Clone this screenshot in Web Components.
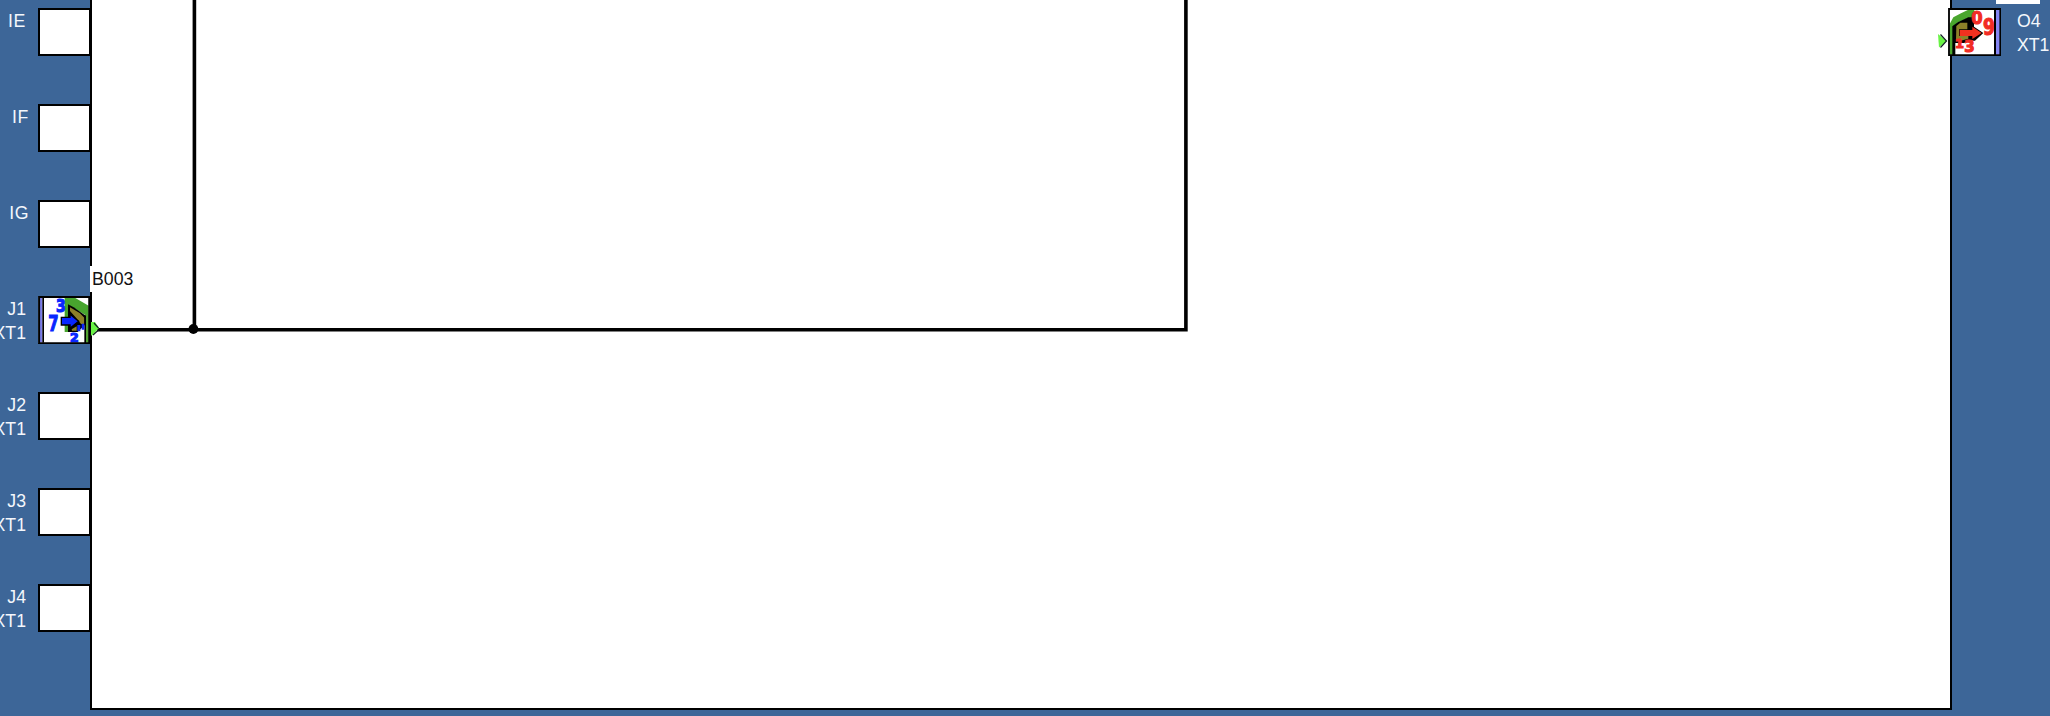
<!DOCTYPE html>
<html lang="en"><head><meta charset="utf-8"><title>Circuit sheet</title>
<style>html,body{margin:0;height:100%;overflow:hidden;background:#3d6698}</style></head><body>
<circuit-editor></circuit-editor>
<script>
const define=(name,html)=>customElements.define(name,class extends HTMLElement{
 constructor(){super();this.attachShadow({mode:'open'}).innerHTML=html;}
});
define('input-terminal',`<style>
:host{display:flex;height:96px;width:92px;color:#f4f7fc;font:17.7px/24px "Liberation Sans",Arial,sans-serif}
.l{width:38px;flex:none;display:flex;flex-direction:column;align-items:flex-end;white-space:nowrap;padding-top:1px;box-sizing:border-box}
.l ::slotted(*){margin-right:var(--gap,12px)}
.b{box-sizing:border-box;width:52px;height:48px;border:2px solid #000;border-right-width:1px;background:#fff;flex:none}
::slotted(svg){display:block;margin:-2px}
</style><div class="l"><slot></slot></div><div class="b"><slot name="icon"></slot></div>`);
define('output-terminal',`<style>
:host{display:flex;height:96px;color:#f4f7fc;font:17.7px/24px "Liberation Sans",Arial,sans-serif}
.b{width:53px;height:48px;flex:none}.l{padding:1px 0 0 16px;display:flex;flex-direction:column;white-space:nowrap}
::slotted(svg){display:block}
</style><div class="b"><slot name="icon"></slot></div><div class="l"><slot></slot></div>`);
define('wire-layer',`<style>:host{display:block;width:100%;height:100%}svg{display:block;overflow:visible}</style>
<svg width="1859" height="708" viewBox="92 0 1859 708"><g fill="none" stroke="#000" stroke-width="3.6"><path d="M194.4 0V330M97 329.8H1185.9V0" stroke-linejoin="miter"/></g><circle cx="193.4" cy="329" r="4.9"/>
<path d="M91 322L95 322L99 328L92 335.5H91Z" fill="#69f345"/><path d="M94 323L98.5 328M98.5 330L93 335" stroke="#122" stroke-width="1.2"/>
<path d="M1938 34L1946.5 41L1939 47.5Z" fill="#69f345"/><path d="M1940.5 34.5L1946.5 41L1940.5 47.5" fill="none" stroke="#122" stroke-width="1.2"/></svg>`);
define('block-label',`<style>:host{display:block;box-sizing:border-box;width:46px;height:26px;background:#fff;color:#111;font:17.7px/26px "Liberation Sans",Arial,sans-serif;padding-left:2px}</style><slot></slot>`);
define('circuit-editor',`<style>
:host{display:flex;width:2050px;height:716px;background:#3d6698;overflow:hidden}
.left{width:90px;flex:none;padding-top:8px;box-sizing:border-box;position:relative;z-index:1}
.sheet{box-sizing:border-box;width:1862px;height:710px;flex:none;border:2px solid #000;border-top:0;background:#fff;position:relative}
.right{width:98px;flex:none;position:relative}
.right output-terminal{position:absolute;left:-4px;top:8px}
.patch{position:absolute;left:44px;top:0;width:44px;height:4px;background:#fff}
block-label{position:absolute;left:-2px;top:266px}
.j{--gap:12px}
.i{letter-spacing:.6px}
wire-layer{position:relative}
text{font-family:"DejaVu Sans";font-weight:bold}
</style>
<div class="left">
<input-terminal><span class="i">IE</span></input-terminal>
<input-terminal style="--gap:9px"><span class="i">IF</span></input-terminal>
<input-terminal style="--gap:9px"><span class="i">IG</span></input-terminal>
<input-terminal class="j"><span>J1</span><span>XT1</span>
<svg slot="icon" width="52" height="48" viewBox="115 347 156 144"><path fill="#fff" d="M117 348h153v141H117z"/>
<path fill="#7c7ee9" d="M121 352h7v134h-7z"/><path d="M128 351h5v136h-5z"/>
<path fill="#48a52e" d="M195 353H227L267 376V487H258V405L222 383L208 376V455H195Z"/>
<path d="M205 372L222 381L256 405V433L234 455H205Z"/>
<path fill="#8d8129" d="M211 381L240 398L254 412V431H244L229 412L211 392Z"/><path fill="#8d8129" d="M216 447L231 438V451H217Z"/>
<path d="M254 405h5v83h-5z"/><path fill="#53a331" d="M259 402h8v84h-8z"/>
<path fill="#0826ff" stroke="#000" stroke-width="4" d="M185 411H211V402L237 423L211 444V434H185Z"/>
<path fill="#0826ff" d="M233 434H242V453H233ZM246 430H254V448H246Z"/>
<g fill="#0826ff" stroke="#0826ff" stroke-width="3.5"><text x="169" y="394" font-size="53" textLength="29" lengthAdjust="spacingAndGlyphs">3</text><text x="146" y="453" font-size="64" textLength="31" lengthAdjust="spacingAndGlyphs">7</text><text x="211" y="485" font-size="36" textLength="26" lengthAdjust="spacingAndGlyphs">2</text></g>
<path fill="none" stroke="#000" stroke-width="5.5" d="M118.500 350h150v138.500H118.500z"/></svg></input-terminal>
<input-terminal class="j"><span>J2</span><span>XT1</span></input-terminal>
<input-terminal class="j"><span>J3</span><span>XT1</span></input-terminal>
<input-terminal class="j"><span>J4</span><span>XT1</span></input-terminal>
</div>
<div class="sheet"><wire-layer></wire-layer><block-label>B003</block-label></div>
<div class="right"><div class="patch"></div><output-terminal>
<svg slot="icon" width="53" height="48" viewBox="84 24 159 144"><path fill="#fff" d="M85 25h158v142H85z"/>
<path fill="#4aa62e" d="M89 72L100 52L123 40L145 29H163V54H144L112 68L101 79V164H89Z"/>
<path d="M97 79L113 67L145 52H162V80L190 99L165 122H147L132 129H106V165H97Z"/>
<path fill="#8d8129" d="M109 78L121 68H142V88H117V108H145V116L128 121H108Z"/>
<path fill="#f0301f" d="M119 90H157V80L185 99L157 117V108H119Z"/>
<g fill="#f12c24" stroke="#f12c24" stroke-width="3.5"><text x="154" y="71" font-size="54" textLength="34" lengthAdjust="spacingAndGlyphs">0</text><text x="189" y="106" font-size="67" textLength="36" lengthAdjust="spacingAndGlyphs">9</text><text x="105" y="145" font-size="36" textLength="27" lengthAdjust="spacingAndGlyphs">1</text><text x="133" y="155" font-size="45" textLength="31" lengthAdjust="spacingAndGlyphs">3</text></g>
<path d="M222 28h6v137h-6z"/><path fill="#8585f3" d="M228 29h12v135h-12z"/><path fill="none" stroke="#000" stroke-width="5.5" d="M87 27h154v138.500H87z"/></svg>
<span>O4</span><span>XT1</span></output-terminal></div>`);
</script></body></html>
